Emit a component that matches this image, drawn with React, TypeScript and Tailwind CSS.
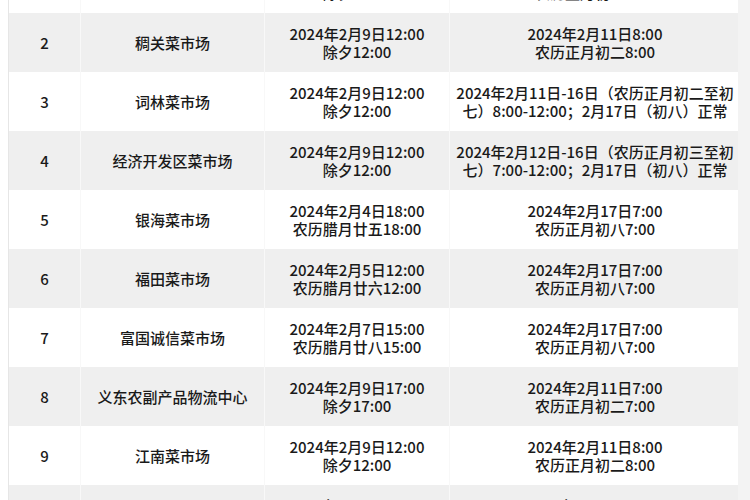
const rows: [string, string, string[], string[]][] = [
  ["1", "宾王菜市场", ["2024年2月9日12:00", "除夕12:00"], ["2024年2月11日8:00", "农历正月初二8:00"]],
  ["2", "稠关菜市场", ["2024年2月9日12:00", "除夕12:00"], ["2024年2月11日8:00", "农历正月初二8:00"]],
  ["3", "词林菜市场", ["2024年2月9日12:00", "除夕12:00"], ["2024年2月11日-16日（农历正月初二至初", "七）8:00-12:00；2月17日（初八）正常"]],
  ["4", "经济开发区菜市场", ["2024年2月9日12:00", "除夕12:00"], ["2024年2月12日-16日（农历正月初三至初", "七）7:00-12:00；2月17日（初八）正常"]],
  ["5", "银海菜市场", ["2024年2月4日18:00", "农历腊月廿五18:00"], ["2024年2月17日7:00", "农历正月初八7:00"]],
  ["6", "福田菜市场", ["2024年2月5日12:00", "农历腊月廿六12:00"], ["2024年2月17日7:00", "农历正月初八7:00"]],
  ["7", "富国诚信菜市场", ["2024年2月7日15:00", "农历腊月廿八15:00"], ["2024年2月17日7:00", "农历正月初八7:00"]],
  ["8", "义东农副产品物流中心", ["2024年2月9日17:00", "除夕17:00"], ["2024年2月11日7:00", "农历正月初二7:00"]],
  ["9", "江南菜市场", ["2024年2月9日12:00", "除夕12:00"], ["2024年2月11日8:00", "农历正月初二8:00"]],
  ["10", "后宅菜市场", ["2024年2月9日12:00", "除夕12:00"], ["2024年2月11日8:00", "农历正月初二8:00"]],
]

function Cell({ lines, gray }: { lines: string[]; gray: boolean }) {
  return (
    <div className={`flex flex-col items-center justify-center whitespace-nowrap leading-[18px] ${gray ? "bg-[#efefef]" : "bg-white"}`}>
      {lines.map((l) => (
        <span key={l}>{l}</span>
      ))}
    </div>
  )
}

export default function App() {
  return (
    <div className="h-[500px] w-[750px] overflow-hidden bg-white" style={{ fontFamily: '"Noto Sans CJK SC", "Noto Sans", sans-serif' }}>
      <div className="flex h-full">
        <div className="w-[8px] shrink-0" />
        <div className="-mt-[46px] w-[730px] shrink-0 border-l border-[#e6e6e6] text-[15px] font-medium text-[#1a1a1a]">
          {rows.map(([no, name, close, open], i) => {
            const gray = i % 2 === 1
            return (
              <div key={no} className="grid h-[59px] grid-cols-[71px_183px_184px_290px] gap-x-[1px] bg-[#f8f8f8]">
                <Cell lines={[no]} gray={gray} />
                <Cell lines={[name]} gray={gray} />
                <Cell lines={close} gray={gray} />
                <Cell lines={open} gray={gray} />
              </div>
            )
          })}
        </div>
        <div className="flex-1 bg-[#f3f3f3]" />
      </div>
    </div>
  )
}
